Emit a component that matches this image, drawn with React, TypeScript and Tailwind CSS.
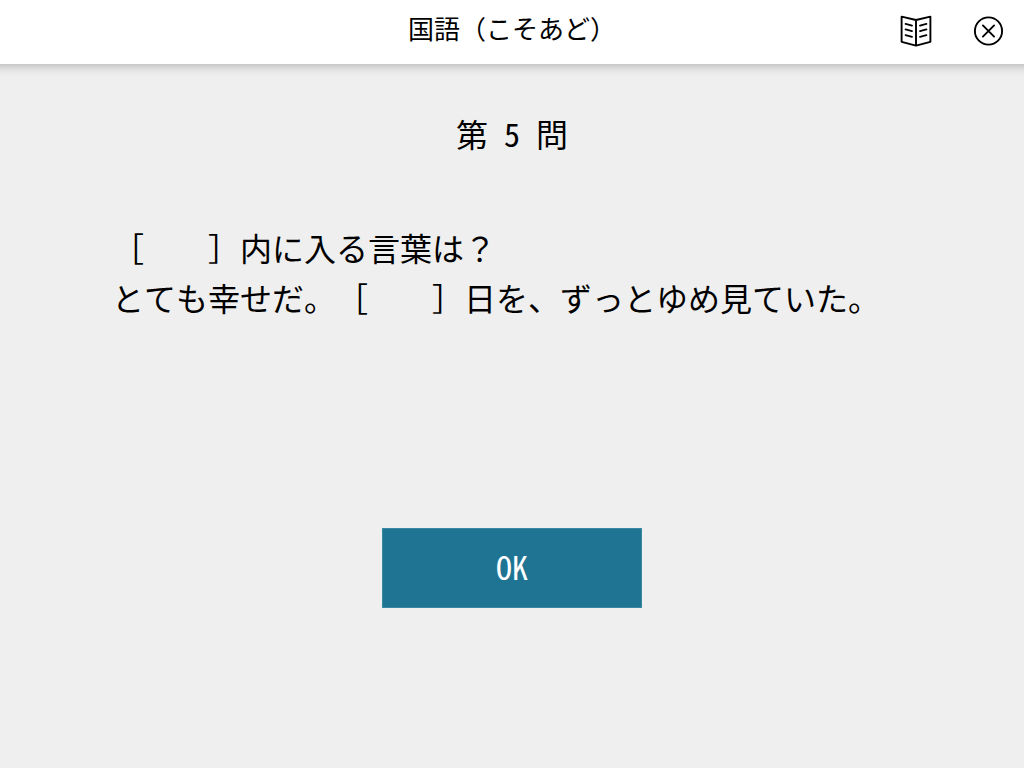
import React, { useState } from "react";

interface Question {
  number: number;
  lines: string[];
}

const question: Question = {
  number: 5,
  lines: [
    "［　　］内に入る言葉は？",
    "とても幸せだ。［　　］日を、ずっとゆめ見ていた。",
  ],
};

const BookIcon: React.FC = () => (
  <svg
    viewBox="0 0 32 32"
    className="h-8 w-8"
    fill="none"
    stroke="currentColor"
    strokeWidth="1.9"
    strokeLinecap="round"
    strokeLinejoin="round"
    aria-hidden="true"
  >
    <path d="M16 5 1.6 1.6v25.2L16 30.6l14.4-3.8V1.6L16 5v25.6" />
    <path d="M5.6 8.9l6.4 1.7M5.6 14.4l6.4 1.7M5.6 20.1l6.4 1.7" />
    <path d="M26.4 8.9L20 10.6M26.4 14.4L20 16.1M26.4 20.1L20 21.8" />
  </svg>
);

const CloseIcon: React.FC = () => (
  <svg
    viewBox="0 0 32 32"
    className="h-8 w-8"
    fill="none"
    stroke="currentColor"
    strokeWidth="1.9"
    strokeLinecap="round"
    aria-hidden="true"
  >
    <circle cx="16.5" cy="16" r="13.6" />
    <path d="M10.9 10.4l11.2 11.2M22.1 10.4L10.9 21.6" />
  </svg>
);

const App: React.FC = () => {
  const [answered, setAnswered] = useState<boolean>(false);

  return (
    <div
      lang="ja"
      className="flex min-h-screen flex-col overflow-x-hidden bg-[#efefef] font-['Noto_Sans_Mono_CJK_JP','Noto_Sans_CJK_JP',sans-serif] text-black [text-spacing-trim:space-all]"
    >
      <header className="grid h-16 grid-cols-[1fr_auto_1fr] items-center bg-white px-5 pb-0.5 shadow-[0_-6px_10px_8px_rgba(0,0,0,0.25)]">
        <h1 className="col-start-2 pb-1.5 text-[26px] leading-8">
          国語（こそあど）
        </h1>
        <div className="flex items-center justify-end gap-10">
          <button type="button" aria-label="教科書" className="cursor-pointer">
            <BookIcon />
          </button>
          <button type="button" aria-label="閉じる" className="cursor-pointer">
            <CloseIcon />
          </button>
        </div>
      </header>

      <main className="flex flex-col items-center pt-11">
        <h2 className="text-[32px] leading-[50px]">第&ensp;{question.number}&ensp;問</h2>
        <div className="min-h-60 w-full px-28 pt-16 text-[32px] leading-[50px]">
          {question.lines.map((line) => (
            <p key={line}>{line}</p>
          ))}
        </div>
        <button
          type="button"
          onClick={() => setAnswered(true)}
          disabled={answered}
          className="mt-[130px] h-20 w-65 cursor-pointer border border-[#3c88a4] bg-[#1f7494] pb-1 text-[32px] leading-none text-white"
        >
          OK
        </button>
      </main>
    </div>
  );
};

export default App;
